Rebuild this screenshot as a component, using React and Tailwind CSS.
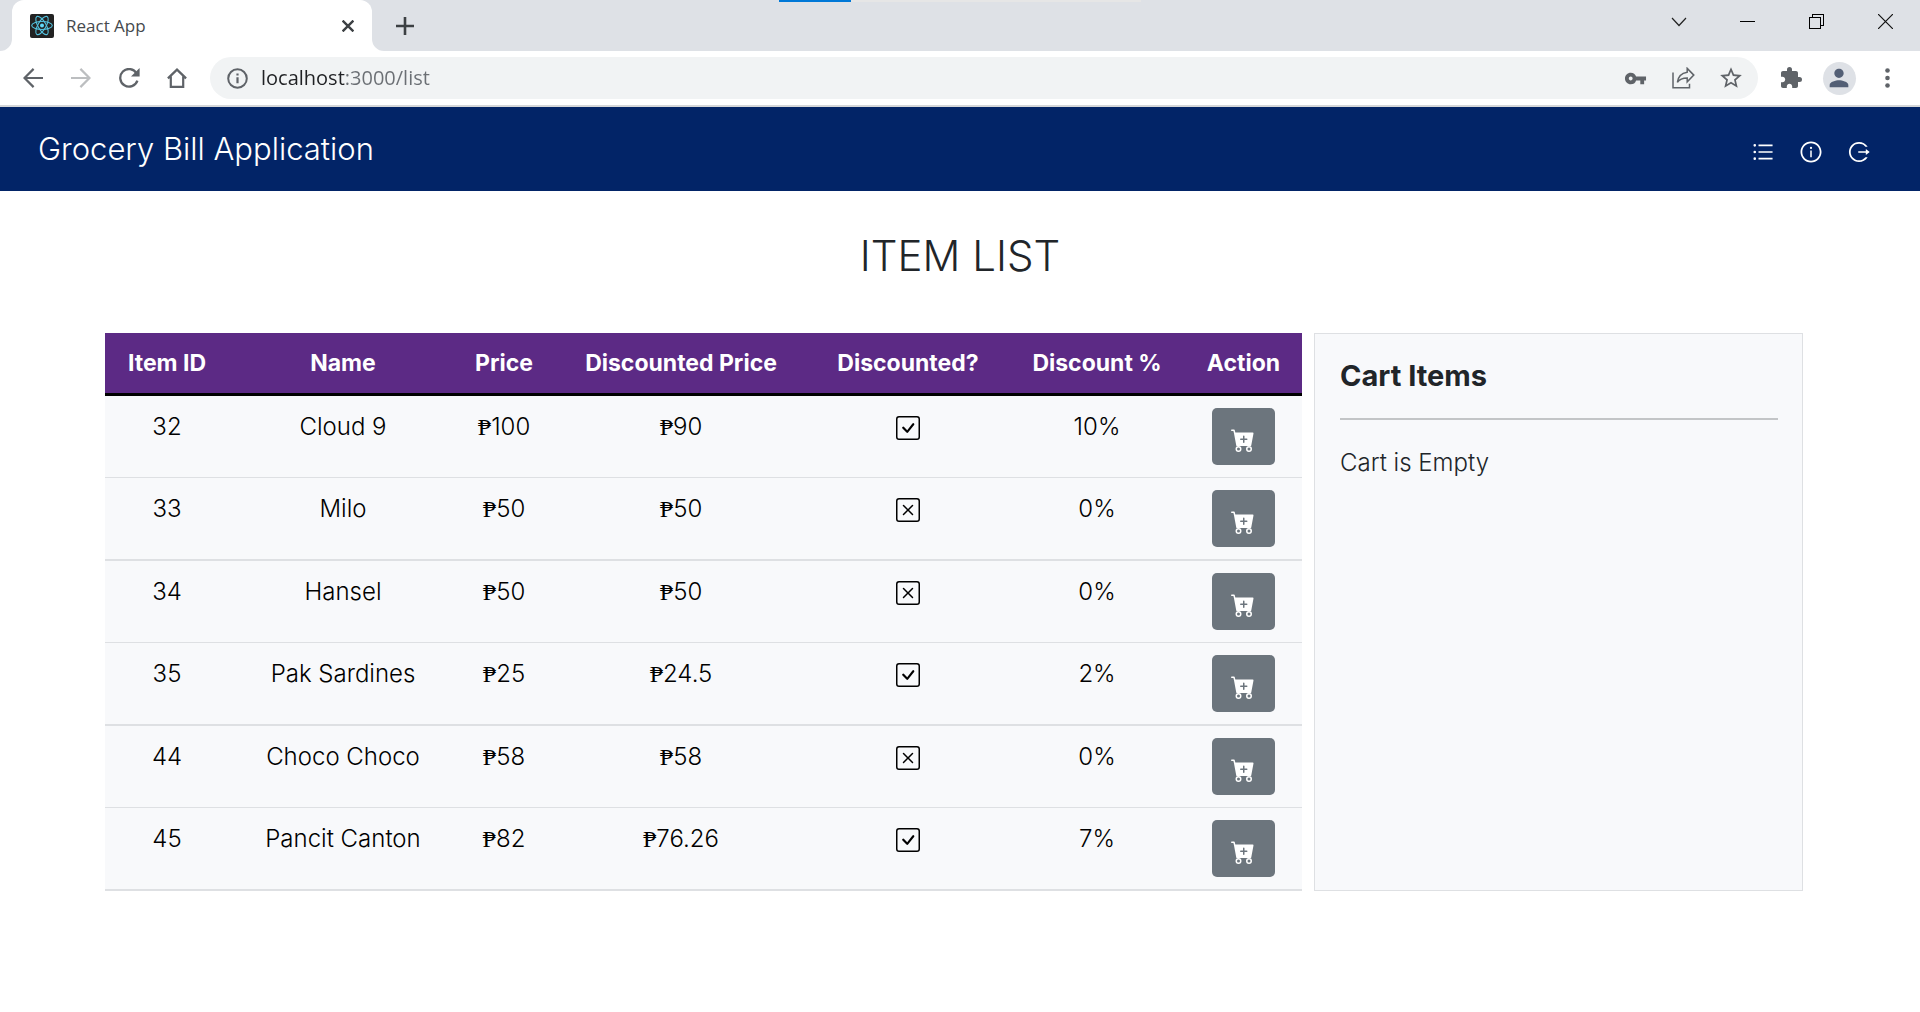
import React from "react";
import { AiOutlineUnorderedList, AiOutlineInfoCircle, AiOutlineLogout } from "react-icons/ai";
import { BsCartPlusFill, BsCheckSquare, BsXSquare } from "react-icons/bs";
import { MdVpnKey, MdExtension, MdStarBorder, MdPerson } from "react-icons/md";

const ITEMS = [
  { id: 32, name: "Cloud 9", price: "100", discounted: "90", isDiscounted: true, percent: 10 },
  { id: 33, name: "Milo", price: "50", discounted: "50", isDiscounted: false, percent: 0 },
  { id: 34, name: "Hansel", price: "50", discounted: "50", isDiscounted: false, percent: 0 },
  { id: 35, name: "Pak Sardines", price: "25", discounted: "24.5", isDiscounted: true, percent: 2 },
  { id: 44, name: "Choco Choco", price: "58", discounted: "58", isDiscounted: false, percent: 0 },
  { id: 45, name: "Pancit Canton", price: "82", discounted: "76.26", isDiscounted: true, percent: 7 },
];

function ReactLogo() {
  return (
    <svg viewBox="0 0 24 24" className="size-6 shrink-0" fill="none" stroke="#53c1de" strokeWidth="1.1">
      <rect width="24" height="24" rx="2" fill="#222" stroke="none" />
      <ellipse cx="12" cy="11.5" rx="10.3" ry="4" />
      <ellipse cx="12" cy="11.5" rx="10.3" ry="4" transform="rotate(60 12 11.5)" />
      <ellipse cx="12" cy="11.5" rx="10.3" ry="4" transform="rotate(120 12 11.5)" />
      <circle cx="12" cy="11.5" r="2" fill="#61dafb" stroke="none" />
    </svg>
  );
}

function TabStrip() {
  return (
    <div className="relative flex h-[51px] items-stretch bg-[#dee1e6]">
      <div className="absolute left-[779px] top-0 flex h-[2px] w-[362px] bg-[#e6e6e6]">
        <div className="w-[72px] bg-[#0078d7]" />
      </div>
      <svg viewBox="0 0 12 12" className="size-3 self-end" fill="#fff">
        <path d="M12 0v12H0A12 12 0 0 0 12 0z" />
      </svg>
      <div className="flex w-[360px] items-center rounded-t-[12px] bg-white pl-[18px] pr-[12px]">
        <ReactLogo />
        <span className="ml-3 flex-1 text-[17px] leading-6 text-[#45494d]">React App</span>
        <button aria-label="Close tab" className="grid size-6 place-items-center">
          <svg viewBox="0 0 12 12" className="size-3" stroke="#3c4043" strokeWidth="2.4">
            <path d="M0.6 0.6l10.8 10.8M11.4 0.6L0.6 11.4" />
          </svg>
        </button>
      </div>
      <svg viewBox="0 0 12 12" className="size-3 self-end" fill="#fff">
        <path d="M0 0v12h12A12 12 0 0 1 0 0z" />
      </svg>
      <button aria-label="New tab" className="grid w-[42px] place-items-center">
        <svg viewBox="0 0 18 18" className="size-[18px]" stroke="#3c4043" strokeWidth="2.6">
          <path d="M9 0v18M0 9h18" />
        </svg>
      </button>
      <div className="ml-auto flex h-[43px]">
        <button aria-label="Search tabs" className="grid w-[69px] place-items-center">
          <svg viewBox="0 0 16 10" className="h-[10px] w-4" fill="none" stroke="#222" strokeWidth="1.2">
            <path d="M1 1l7 7.5L15 1" />
          </svg>
        </button>
        <button aria-label="Minimize" className="grid w-[69px] place-items-center">
          <svg viewBox="0 0 15 15" className="size-[15px]" fill="#000" shapeRendering="crispEdges">
            <path d="M0 7h15v1H0z" />
          </svg>
        </button>
        <button aria-label="Restore" className="grid w-[69px] place-items-center">
          <svg viewBox="0 0 15 15" className="size-[15px]" fill="none" stroke="#000" shapeRendering="crispEdges">
            <path d="M0.5 3.5h11v11h-11zM3.5 3.5v-3h11v11h-3" />
          </svg>
        </button>
        <button aria-label="Close window" className="grid w-[69px] place-items-center">
          <svg viewBox="0 0 15 15" className="size-[15px]" stroke="#111" strokeWidth="1.2">
            <path d="M0 0l15 15M15 0L0 15" />
          </svg>
        </button>
      </div>
    </div>
  );
}

function ToolButton({ label, children }) {
  return (
    <button aria-label={label} className="grid h-10 w-12 shrink-0 place-items-center text-[#5f6368]">
      {children}
    </button>
  );
}

function Toolbar() {
  return (
    <div className="flex h-[56px] items-center border-b-2 border-[#d5d7d9] bg-white px-[9px]">
      <ToolButton label="Back">
        <svg viewBox="0 0 20 20" className="size-5" fill="none" stroke="currentColor" strokeWidth="2.2">
          <path d="M20 10H2M10.6 0.9L1.5 10l9.1 9.1" />
        </svg>
      </ToolButton>
      <ToolButton label="Forward">
        <svg viewBox="0 0 20 20" className="size-5" fill="none" stroke="#bcbec0" strokeWidth="2.2">
          <path d="M0 10h18M9.4 0.9l9.1 9.1-9.1 9.1" />
        </svg>
      </ToolButton>
      <ToolButton label="Reload">
        <svg viewBox="0 0 21 20" className="h-5 w-[21px]" fill="none" stroke="currentColor" strokeWidth="2.3">
          <path d="M17.6 5.3A8.8 8.8 0 1 0 18.4 12.6" />
          <path d="M20.6 0v8.6H12z" fill="currentColor" stroke="none" />
        </svg>
      </ToolButton>
      <ToolButton label="Home">
        <svg viewBox="0 0 20 20" className="size-5" fill="none" stroke="currentColor" strokeWidth="2.2">
          <path d="M0.9 10.4L10 1.6l9.1 8.8M3.8 8.5V18.9h12.4V8.5" />
        </svg>
      </ToolButton>
      <div className="ml-[9px] flex h-[42px] flex-1 items-center rounded-full bg-[#f1f3f4] pl-[17px] pr-[3px]">
        <svg viewBox="0 0 21 21" className="size-[21px] shrink-0" fill="none" stroke="#5f6368" strokeWidth="2">
          <circle cx="10.5" cy="10.5" r="9.3" />
          <path d="M10.5 9.2v6M10.5 5.4v2.2" strokeWidth="2.2" />
        </svg>
        <input
          aria-label="Address"
          defaultValue="localhost:3000/list"
          className="ml-[13px] min-w-0 flex-1 bg-linear-to-r from-[#202124] from-[84px] to-[#6b6f74] to-[85px] bg-clip-text text-[20px] leading-7 text-transparent outline-none"
        />
        <ToolButton label="Passwords"><MdVpnKey className="size-[23px]" /></ToolButton>
        <ToolButton label="Share">
          <svg viewBox="0 0 23 22" className="h-[22px] w-[23px]" fill="none" stroke="currentColor" strokeWidth="1.5">
            <path d="M1 5.5v15.2h16.5v-4" />
            <path d="M15.2 1.4l6.6 6.7-6.6 6.7v-3.7c-4.5 0-7.6 1-9.8 4.3 0.6-5.4 3.7-9.3 9.8-10.2z" />
          </svg>
        </ToolButton>
        <ToolButton label="Bookmark"><MdStarBorder className="size-[26px]" /></ToolButton>
      </div>
      <div className="ml-[9px] flex">
        <ToolButton label="Extensions"><MdExtension className="size-6" /></ToolButton>
        <ToolButton label="Profile">
          <span className="grid size-[33px] place-items-center rounded-full bg-[#dee1e6] text-[#535f75]">
            <MdPerson className="size-7" />
          </span>
        </ToolButton>
        <ToolButton label="Menu">
          <svg viewBox="0 0 5 20" className="h-5 w-[5px]" fill="currentColor">
            <circle cx="2.5" cy="2.5" r="2.3" />
            <circle cx="2.5" cy="10" r="2.3" />
            <circle cx="2.5" cy="17.5" r="2.3" />
          </svg>
        </ToolButton>
      </div>
    </div>
  );
}

function Peso({ value }) {
  return (
    <>
      <span className="font-['Liberation_Serif',serif] font-normal">₱</span>
      {value}
    </>
  );
}

function AppHeader() {
  return (
    <header className="flex h-[84px] items-center justify-between bg-[#022467] pl-[38px] pr-[49px] text-white">
      <a href="#home" className="text-[31px] font-light leading-[44px]">Grocery Bill Application</a>
      <nav className="mt-[6px] flex gap-6">
        <a href="#list" aria-label="Item list"><AiOutlineUnorderedList className="size-6" /></a>
        <a href="#about" aria-label="About"><AiOutlineInfoCircle className="size-6" /></a>
        <a href="#logout" aria-label="Log out"><AiOutlineLogout className="size-6" /></a>
      </nav>
    </header>
  );
}

function ItemTable() {
  return (
    <table className="w-full table-fixed border-separate border-spacing-0 text-center text-black">
      <colgroup>
        <col className="w-[124px]" />
        <col className="w-[228px]" />
        <col className="w-[94px]" />
        <col className="w-[260px]" />
        <col className="w-[194px]" />
        <col className="w-[184px]" />
        <col className="w-[113px]" />
      </colgroup>
      <thead>
        <tr className="whitespace-nowrap bg-[#5c2a85] text-[23px] leading-9 text-white [&>th]:border-b-[3px] [&>th]:border-black [&>th]:py-3 [&>th]:font-bold">
          <th>Item ID</th>
          <th>Name</th>
          <th>Price</th>
          <th>Discounted Price</th>
          <th>Discounted?</th>
          <th>Discount %</th>
          <th className="pr-1">Action</th>
        </tr>
      </thead>
      <tbody className="bg-[#f8f9fb] text-2xl font-light leading-[38px] [&>tr:nth-child(even)>td]:border-b-2 [&>tr>td]:border-b [&>tr>td]:border-[#dee0e3] [&>tr>td]:pt-3 [&>tr>td]:align-top">
        {ITEMS.map((item) => (
          <tr key={item.id}>
            <td>{item.id}</td>
            <td>{item.name}</td>
            <td><Peso value={item.price} /></td>
            <td><Peso value={item.discounted} /></td>
            <td>
              {item.isDiscounted ? (
                <BsCheckSquare className="mx-auto mt-2 size-6" />
              ) : (
                <BsXSquare className="mx-auto mt-2 size-6" />
              )}
            </td>
            <td>{item.percent}%</td>
            <td className="pb-3 pr-1">
              <button
                aria-label={"Add " + item.name + " to cart"}
                className="mx-auto flex h-[57px] w-[63px] items-center justify-center rounded-[5px] bg-[#6c757d] pr-[2px] pt-[6px] text-white"
              >
                <BsCartPlusFill className="size-6" />
              </button>
            </td>
          </tr>
        ))}
      </tbody>
    </table>
  );
}

export default function App() {
  return (
    <div className="min-h-screen bg-white font-[Inter,sans-serif] text-[#212529]">
      <div className="font-['Open_Sans',sans-serif]">
        <TabStrip />
        <Toolbar />
      </div>
      <AppHeader />
      <main className="pl-[105px] pr-[117px] pt-[36px]">
        <h1 className="pl-3 text-center text-[42px] font-light leading-[58px]">ITEM LIST</h1>
        <div className="mt-12 flex items-stretch gap-3">
          <div className="min-w-0 flex-1">
            <ItemTable />
          </div>
          <aside className="w-[489px] border border-[#dee0e3] bg-[#f8f9fb] pl-[25px] pr-6 pt-6">
            <h2 className="text-[29px] font-bold leading-9">Cart Items</h2>
            <hr className="mt-6 border-t-2 border-[#c3c5c7]" />
            <p className="mt-6 text-2xl font-light leading-[38px]">Cart is Empty</p>
          </aside>
        </div>
      </main>
    </div>
  );
}
